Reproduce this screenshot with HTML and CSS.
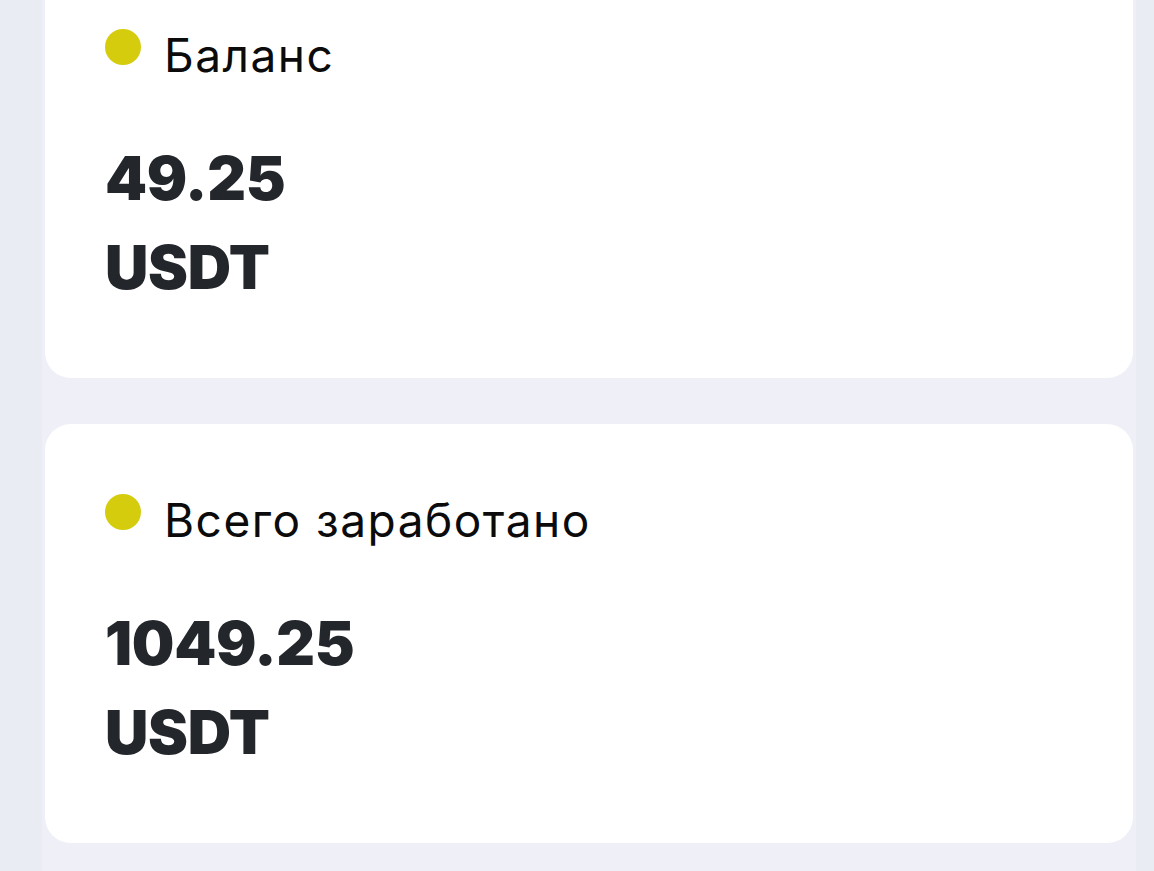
FILE: index.html
```html
<!DOCTYPE html>
<html lang="ru">
<head>
<meta charset="utf-8">
<title>Баланс</title>
<link rel="stylesheet" href="styles.css">
</head>
<body>
<main class="page">
  <section class="card">
    <div class="card-head">
      <span class="dot"></span>
      <span class="label">Баланс</span>
    </div>
    <div class="amount">
      <div class="value">49.25</div>
      <div class="value">USDT</div>
    </div>
  </section>
  <section class="card">
    <div class="card-head">
      <span class="dot"></span>
      <span class="label">Всего заработано</span>
    </div>
    <div class="amount">
      <div class="value">1049.25</div>
      <div class="value">USDT</div>
    </div>
  </section>
</main>
</body>
</html>
```

FILE: styles.css
```css
html, body {
  margin: 0;
  padding: 0;
}
body {
  background: #eaecf4;
  font-family: Inter, "Noto Sans", sans-serif;
  overflow: hidden;
}
.page {
  margin: -41px 18px 0 42px;
  padding: 0 3px 40px 3px;
  background: #eff0f7;
  display: flex;
  flex-direction: column;
  gap: 46px;
}
.card {
  background: #ffffff;
  border-radius: 26px;
  padding: 68px 60px 66px 60px;
  height: 419px;
  box-sizing: border-box;
}
.card-head {
  display: flex;
  align-items: flex-start;
  gap: 23px;
}
.dot {
  width: 36px;
  height: 36px;
  border-radius: 50%;
  background: #d5cc0e;
  margin-top: 2px;
  flex: none;
}
.label {
  font-size: 46px;
  line-height: 56px;
  font-weight: 400;
  color: #0b0b0c;
  letter-spacing: 1.5px;
}
.amount {
  margin-top: 51px;
}
.value {
  font-size: 60px;
  line-height: 89px;
  font-weight: 900;
  color: #23262b;
  letter-spacing: -0.3px;
}
```
